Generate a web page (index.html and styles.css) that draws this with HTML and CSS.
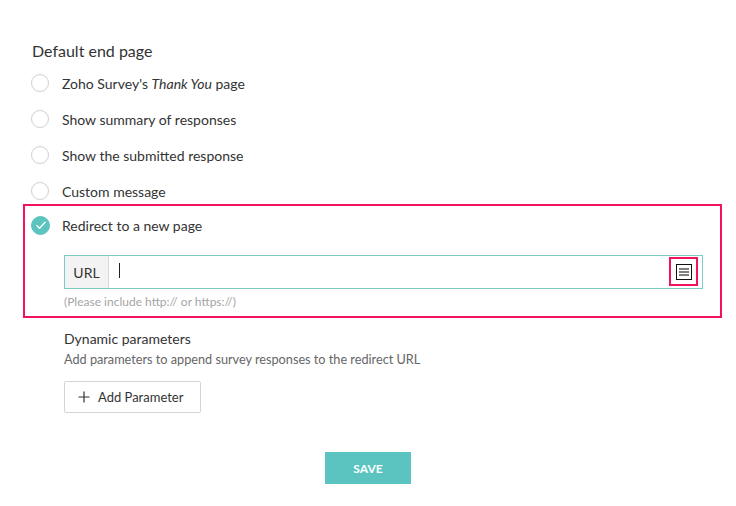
FILE: index.html
```html
<!DOCTYPE html>
<html lang="en">
<head>
    <meta charset="UTF-8">
    <title>End page settings</title>
    <link rel="stylesheet" href="styles.css">
</head>
<body>
    <div class="container">
        <h2 class="title">Default end page</h2>

        <div class="options">
            <label class="option">
                <span class="radio"></span>
                <span>Zoho Survey's <em>Thank You</em> page</span>
            </label>
            <label class="option">
                <span class="radio"></span>
                <span>Show summary of responses</span>
            </label>
            <label class="option">
                <span class="radio"></span>
                <span>Show the submitted response</span>
            </label>
            <label class="option">
                <span class="radio"></span>
                <span>Custom message</span>
            </label>
        </div>

        <div class="redirect-box">
            <label class="option option-checked">
                <span class="radio checked">
                    <svg width="12" height="10" viewBox="0 0 12 10">
                        <path d="M1.5 5.2 L4.6 8.2 L10.5 1.8" fill="none" stroke="#fff" stroke-width="1.3"/>
                    </svg>
                </span>
                <span>Redirect to a new page</span>
            </label>

            <div class="url-group">
                <div class="url-label">URL</div>
                <div class="url-field"><span class="caret"></span></div>
                <div class="url-action">
                    <span class="list-icon">
                        <span></span><span></span><span></span>
                    </span>
                </div>
            </div>
            <p class="hint">(Please include http:// or https://)</p>
        </div>

        <div class="dynamic">
            <h3 class="dynamic-title">Dynamic parameters</h3>
            <p class="dynamic-desc">Add parameters to append survey responses to the redirect URL</p>
            <button class="add-btn">
                <svg width="12" height="12" viewBox="0 0 12 12">
                    <path d="M6 0.5 V11.5 M0.5 6 H11.5" stroke="#333" stroke-width="1.2"/>
                </svg>
                Add Parameter
            </button>
        </div>

        <div class="actions">
            <button class="save-btn">SAVE</button>
        </div>
    </div>
</body>
</html>
```

FILE: styles.css
```css
body {
    margin: 0;
    font-family: Lato, 'Open Sans', sans-serif;
    color: #333;
    background: #fff;
}
.container {
    padding: 42px 0 0 0;
}
.title {
    margin: 0 0 0 32px;
    font-size: 16px;
    font-weight: normal;
    line-height: 18px;
}
.options {
    margin: 5px 0 0 31px;
}
.option {
    display: flex;
    align-items: center;
    gap: 13px;
    height: 36px;
    font-size: 14px;
}
.radio {
    width: 18px;
    height: 18px;
    border: 1px solid #d0d0d0;
    border-radius: 50%;
    box-sizing: border-box;
    flex-shrink: 0;
    display: flex;
    align-items: center;
    justify-content: center;
}
.radio.checked {
    width: 19px;
    height: 19px;
    background: #5bc4bf;
    border-color: #5bc4bf;
}
.option-checked {
    height: 38px;
    gap: 12px;
}
.redirect-box {
    margin: -5px 14px 0 23px;
    border: 2px solid #f3135a;
    padding: 0 17px 6px 6px;
}
.url-group {
    display: flex;
    height: 34px;
    box-sizing: border-box;
    margin: 11px 0 0 33px;
    border: 1px solid #7ccbc5;
}
.url-label {
    width: 43px;
    background: #f3f3f3;
    border-right: 1px solid #dadada;
    display: flex;
    align-items: center;
    justify-content: center;
    font-size: 14px;
}
.url-field {
    flex: 1;
    display: flex;
    align-items: center;
    padding-left: 10px;
}
.caret {
    width: 1px;
    height: 15px;
    background: #222;
    margin-top: -4px;
}
.url-action {
    width: 29px;
    height: 29px;
    box-sizing: border-box;
    border: 2px solid #f3135a;
    margin: 1px 4px 0 0;
    display: flex;
    align-items: center;
    justify-content: center;
}
.list-icon {
    width: 16px;
    height: 16px;
    box-sizing: border-box;
    border: 1px solid #111;
    display: flex;
    flex-direction: column;
    justify-content: center;
    gap: 1px;
    padding: 0 2px;
}
.list-icon span {
    height: 2px;
    background: #808080;
}
.hint {
    margin: 5px 0 0 33px;
    font-size: 12px;
    line-height: 16px;
    color: #a5a5a5;
}
.dynamic {
    margin-left: 64px;
}
.dynamic-title {
    margin: 12px 0 0 0;
    font-size: 14px;
    font-weight: normal;
    line-height: 18px;
}
.dynamic-desc {
    margin: 3px 0 0 0;
    font-size: 12.7px;
    line-height: 16px;
    color: #666;
}
.add-btn {
    margin-top: 14px;
    height: 32px;
    width: 137px;
    background: #fff;
    border: 1px solid #d5d5d5;
    border-radius: 2px;
    font-family: inherit;
    font-size: 13px;
    color: #333;
    display: flex;
    align-items: center;
    gap: 8px;
    padding: 0 0 0 13px;
}
.actions {
    display: flex;
    justify-content: center;
    margin-top: 39px;
}
.save-btn {
    width: 86px;
    height: 32px;
    border: none;
    background: #5bc4c0;
    color: #fff;
    font-family: inherit;
    font-weight: bold;
    font-size: 12px;
}
```
